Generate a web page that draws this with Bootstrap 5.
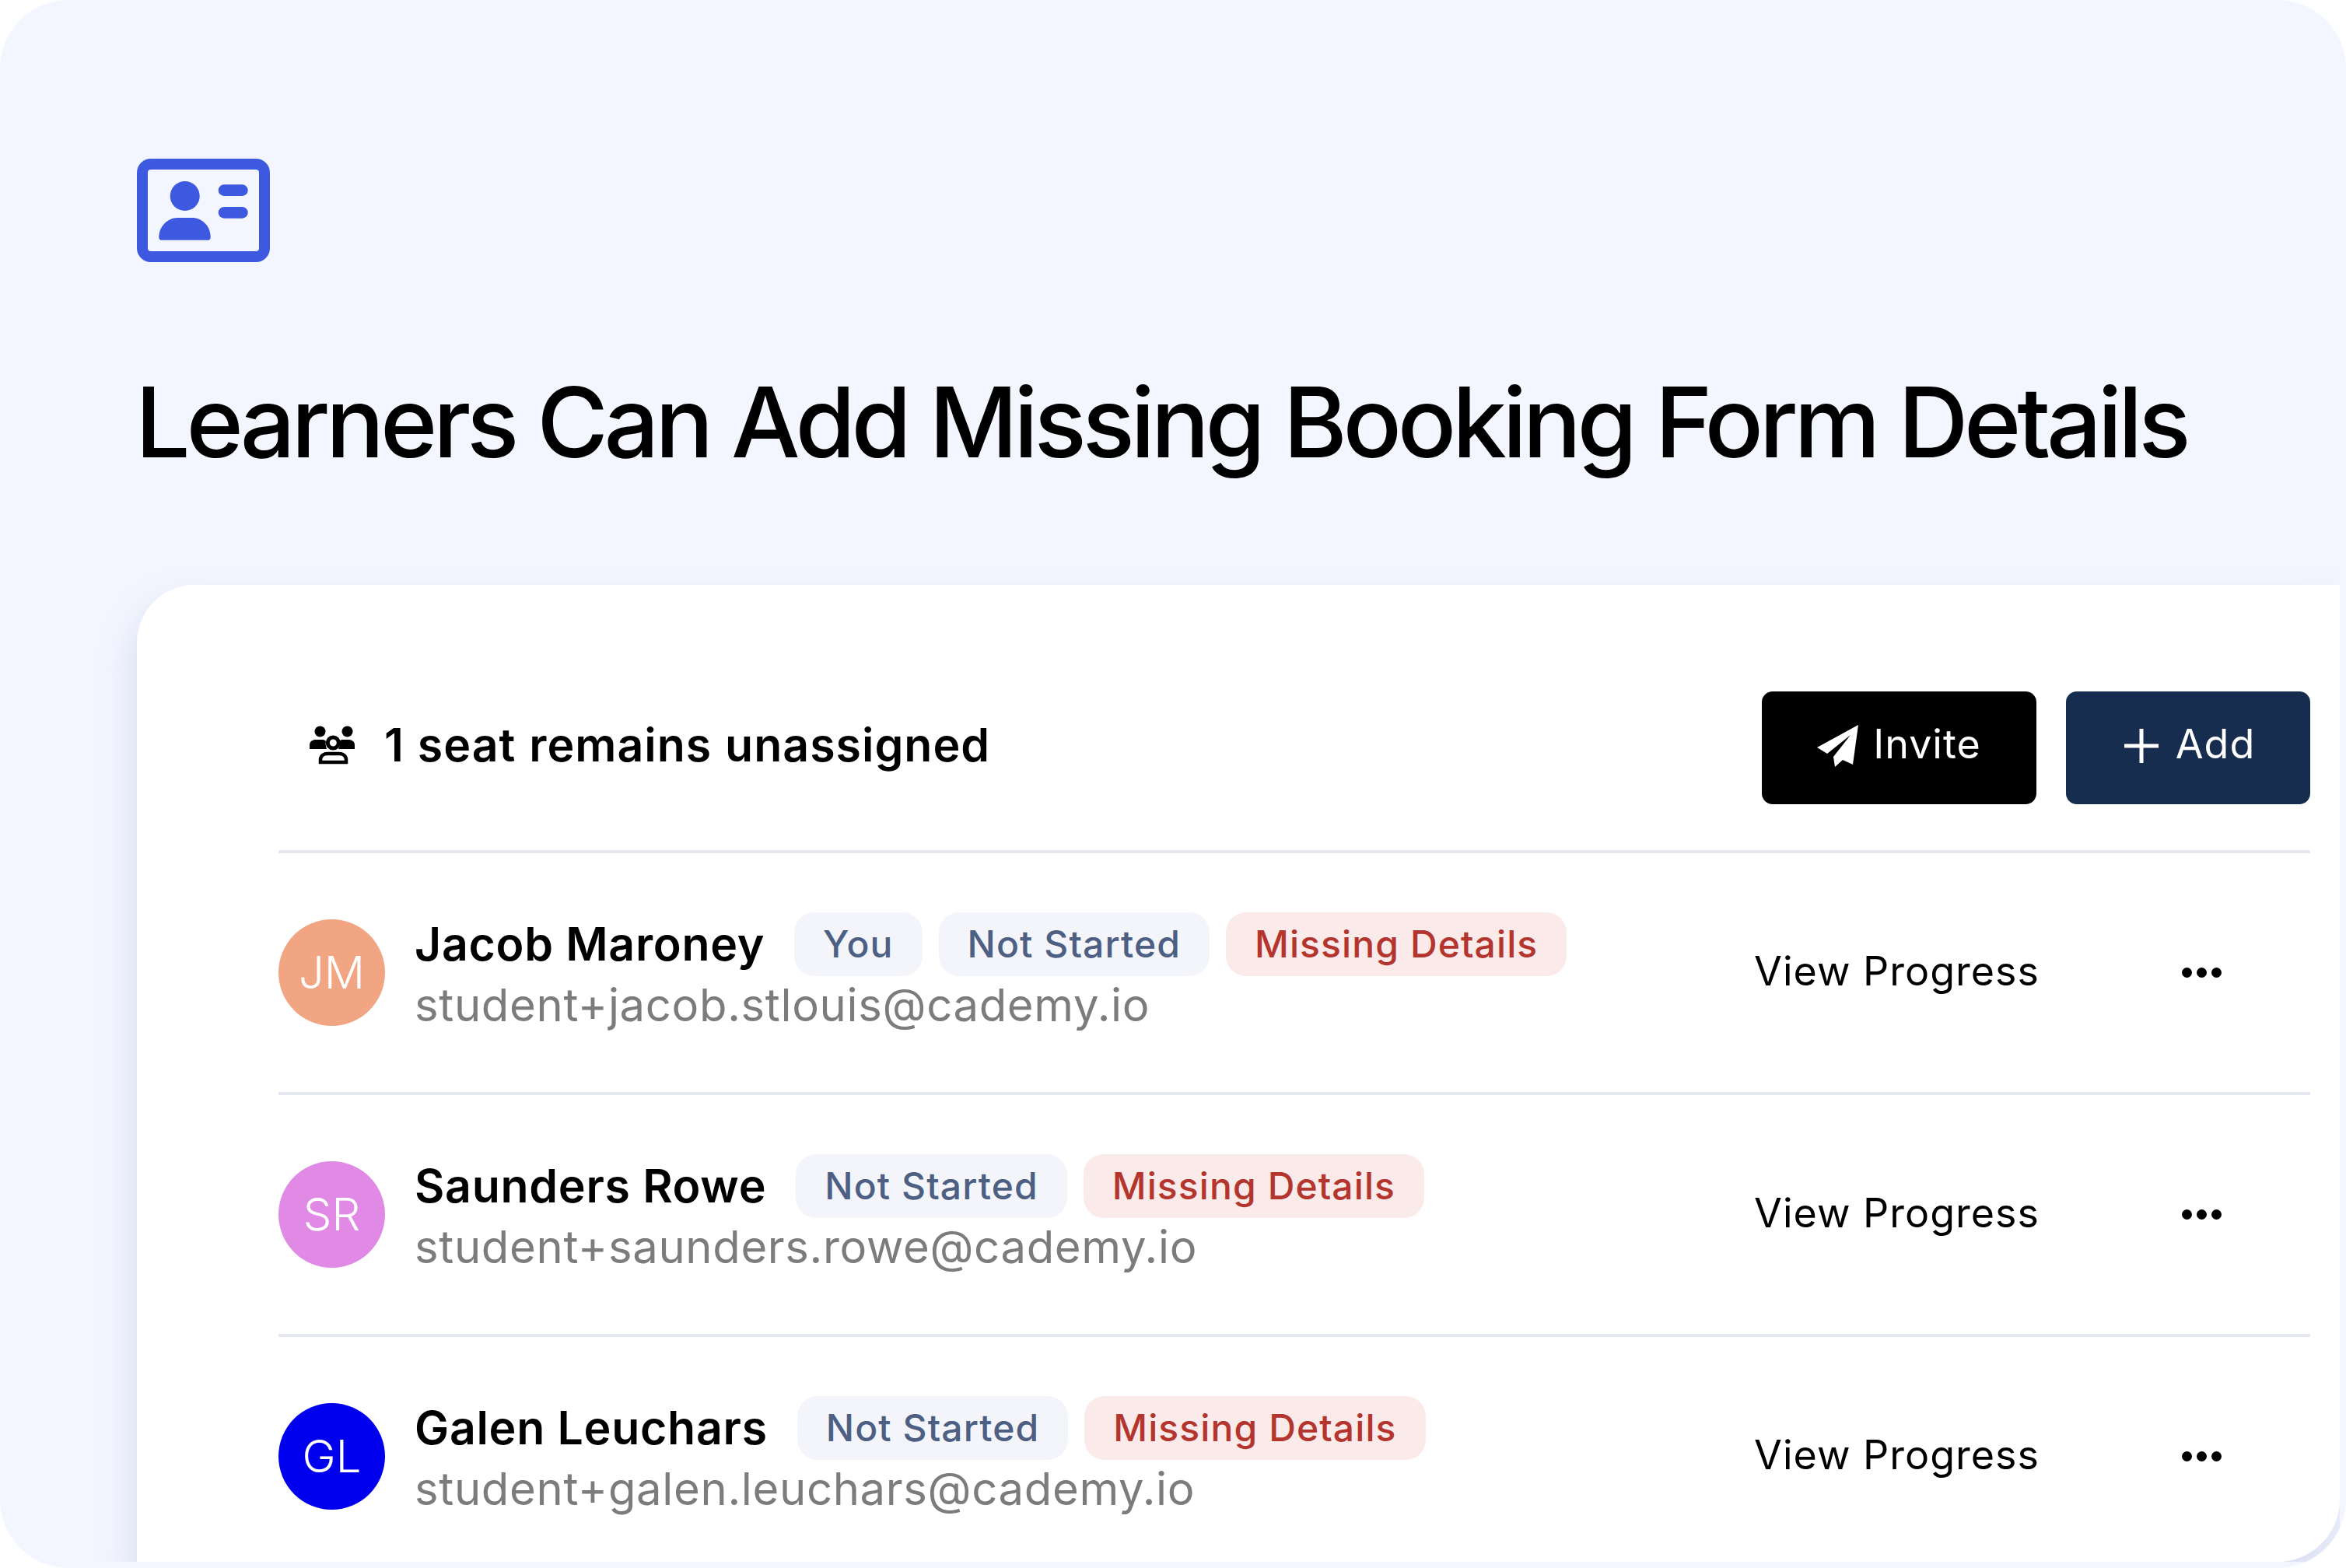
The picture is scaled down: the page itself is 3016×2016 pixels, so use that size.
<!doctype html>
<html lang="en">
<head>
<meta charset="utf-8">
<title>Learners Can Add Missing Booking Form Details</title>
<link rel="stylesheet" href="https://cdn.jsdelivr.net/npm/bootstrap@5.3.0/dist/css/bootstrap.min.css">
<style>
html,body{background:#fff;margin:0}
body{font-family:"Inter","Liberation Sans",sans-serif;color:#000;width:3016px;height:2016px;overflow:hidden}
.frame{width:3016px;height:2016px;background:#f3f6ff;border-radius:88px;padding:204px 8px 8px 176px;overflow:hidden}
.logo{display:block;width:171px;height:134px}
.hero{font-size:125px;font-weight:500;line-height:150px;letter-spacing:-5.3px;margin:0 0 0 -2px;padding-top:130px;height:414px;color:#000}
.panel{height:1256px;background:#fff;border-radius:74px 0 80px 0;padding:137px 38px 0 182px;box-shadow:-4px 24px 44px rgba(170,178,215,.38);clip-path:inset(-80px 0 0 -80px)}
.head-row{height:208px;padding-bottom:63px;border-bottom:4px solid #e5e8f1}
.seat{padding-left:40px;font-size:59px;font-weight:600;letter-spacing:1px;word-spacing:1px;gap:38px;line-height:1;height:145px;padding-bottom:8px}
.cta{font-size:52px;font-weight:400;letter-spacing:1px;height:145px;border-radius:14px;color:#fff;border:0;padding:0 0 6px;gap:18px}
.cta span{padding-bottom:4px}
.cta-black{width:353px;background:#000}
.cta-navy{width:314px;background:#172d50;margin-left:38px;gap:22px;padding-left:4px}
.cta:hover{color:#fff}
.person{height:311px;border-bottom:4px solid #e5e8f1}
.person:last-child{border-bottom-color:transparent}
.face{width:137px;height:137px;color:#fff;font-size:58px;font-weight:300;margin-right:38px}
.face-a{background:#f2a582}.face-b{background:#e08ae6}.face-c{background:#0000ef}
.who-name{font-size:59px;font-weight:600;letter-spacing:.7px;line-height:82px;height:82px;gap:21px}
.who-name>span:first-child{margin-right:17px}
.who-mail{font-size:58px;line-height:74px;color:#7c7c7c;letter-spacing:.65px}
.tag{font-size:48px;font-weight:500;line-height:82px;height:82px;padding:0 37px;border-radius:26px;letter-spacing:1.1px}
.tag-soft{background:#f3f5fb;color:#4d5f83}
.tag-warn{background:#fbeaea;color:#b4352d}
.prog{font-size:52px;letter-spacing:1px;margin-right:183px;line-height:1;padding-bottom:3px}
.more{display:block;width:51px;height:13px;margin-right:114px}
</style>
</head>
<body>
<div class="frame">
  <svg class="logo" viewBox="0 0 171 134" aria-hidden="true">
    <rect x="7" y="7" width="157" height="119" rx="11" fill="none" stroke="#3d59e0" stroke-width="14"/>
    <circle cx="61.7" cy="48" r="19" fill="#3d59e0"/>
    <path d="M31.5 104.7q-3.2 0-3.2-4C28.3 87 40 76 52 76H71c13 0 23.7 11 23.7 24.7q0 4-3.2 4Z" fill="#3d59e0"/>
    <rect x="104.7" y="33.3" width="38" height="14.7" rx="7.3" fill="#3d59e0"/>
    <rect x="104.7" y="62" width="38" height="14.7" rx="7.3" fill="#3d59e0"/>
  </svg>
  <h1 class="hero">Learners Can Add Missing Booking Form Details</h1>
  <div class="panel">
    <div class="head-row d-flex align-items-start justify-content-between">
      <div class="seat d-flex align-items-center">
        <svg width="58" height="50" viewBox="19 14 58 50" aria-hidden="true">
          <circle cx="32.5" cy="21.5" r="7"/><circle cx="67.5" cy="21.5" r="7"/>
          <path d="M19 44v-5c0-5 4-7 8-7h9c2 0 3 1 4 2-1 3 0 7 1 10ZM77 44v-5c0-5-4-7-8-7h-8c-2 0-3 1-4 2 1 3 1 7-1 10Z"/>
          <circle cx="49.3" cy="36" r="7" fill="none" stroke="#000" stroke-width="5"/>
          <path d="M33 61v-3c0-6 5-8 9-8h15c4 0 9 2 9 8v3Z" fill="none" stroke="#000" stroke-width="4.500"/>
        </svg>
        <span>1 seat remains unassigned</span>
      </div>
      <div class="d-flex">
        <button type="button" class="btn cta cta-black d-flex align-items-center justify-content-center">
          <svg width="54" height="54" viewBox="0 0 54 54" fill="#fff" aria-hidden="true">
            <path d="M53 0 0 29l13 8L43 13 21 41l2 13 10-9 13 6Z"/>
          </svg>
          <span>Invite</span>
        </button>
        <button type="button" class="btn cta cta-navy d-flex align-items-center justify-content-center">
          <svg width="44" height="44" viewBox="0 0 44 44" aria-hidden="true"><path d="M22 0v44M0 22h44" stroke="#fff" stroke-width="5" fill="none"/></svg>
          <span>Add</span>
        </button>
      </div>
    </div>

    <div class="person d-flex align-items-center">
      <div class="face face-a rounded-circle d-flex align-items-center justify-content-center flex-shrink-0">JM</div>
      <div class="flex-grow-1">
        <div class="who-name d-flex"><span>Jacob Maroney</span><span class="tag tag-soft">You</span><span class="tag tag-soft">Not Started</span><span class="tag tag-warn">Missing Details</span></div>
        <div class="who-mail">student+jacob.stlouis@cademy.io</div>
      </div>
      <div class="prog">View Progress</div>
      <svg class="more" viewBox="0 0 51 13" aria-hidden="true"><circle cx="6.500" cy="6.500" r="6.500"/><circle cx="25.500" cy="6.500" r="6.500"/><circle cx="44.500" cy="6.500" r="6.500"/></svg>
    </div>

    <div class="person d-flex align-items-center">
      <div class="face face-b rounded-circle d-flex align-items-center justify-content-center flex-shrink-0">SR</div>
      <div class="flex-grow-1">
        <div class="who-name d-flex"><span>Saunders Rowe</span><span class="tag tag-soft">Not Started</span><span class="tag tag-warn">Missing Details</span></div>
        <div class="who-mail">student+saunders.rowe@cademy.io</div>
      </div>
      <div class="prog">View Progress</div>
      <svg class="more" viewBox="0 0 51 13" aria-hidden="true"><circle cx="6.500" cy="6.500" r="6.500"/><circle cx="25.500" cy="6.500" r="6.500"/><circle cx="44.500" cy="6.500" r="6.500"/></svg>
    </div>

    <div class="person d-flex align-items-center">
      <div class="face face-c rounded-circle d-flex align-items-center justify-content-center flex-shrink-0">GL</div>
      <div class="flex-grow-1">
        <div class="who-name d-flex"><span>Galen Leuchars</span><span class="tag tag-soft">Not Started</span><span class="tag tag-warn">Missing Details</span></div>
        <div class="who-mail">student+galen.leuchars@cademy.io</div>
      </div>
      <div class="prog">View Progress</div>
      <svg class="more" viewBox="0 0 51 13" aria-hidden="true"><circle cx="6.500" cy="6.500" r="6.500"/><circle cx="25.500" cy="6.500" r="6.500"/><circle cx="44.500" cy="6.500" r="6.500"/></svg>
    </div>
  </div>
</div>
<script src="https://cdn.jsdelivr.net/npm/bootstrap@5.3.0/dist/js/bootstrap.bundle.min.js"></script>
</body>
</html>
